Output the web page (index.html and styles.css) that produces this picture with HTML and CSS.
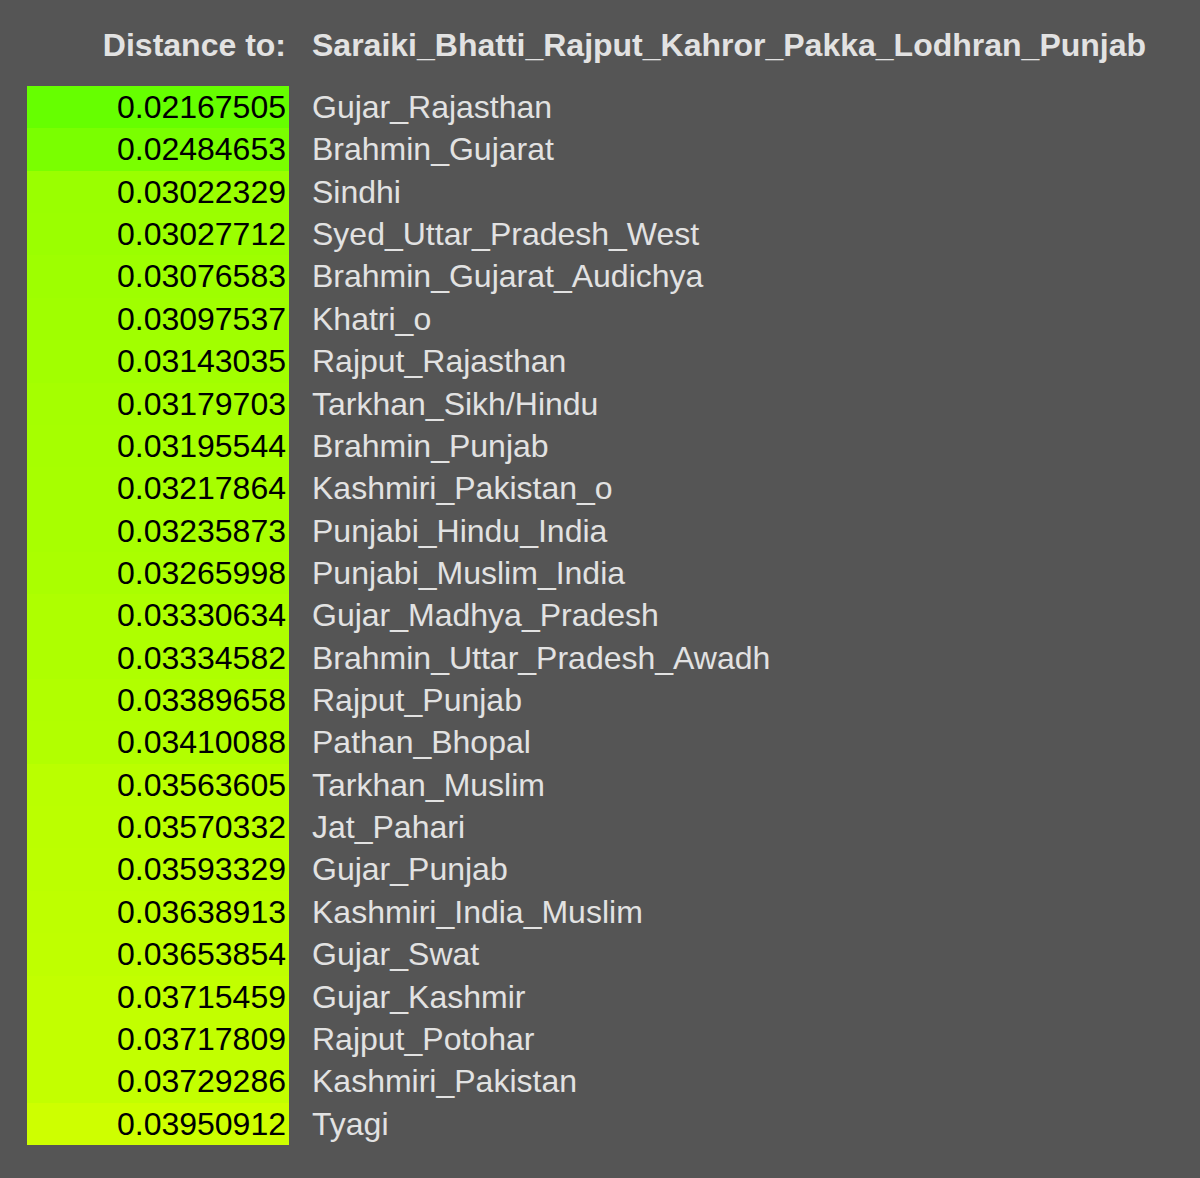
FILE: index.html
```html
<!DOCTYPE html>
<html>
<head>
<meta charset="utf-8">
<title>Distance</title>
<link rel="stylesheet" href="styles.css">
</head>
<body>
<div class="page">
  <div class="head">
    <div class="label">Distance to:</div>
    <div class="target">Saraiki_Bhatti_Rajput_Kahror_Pakka_Lodhran_Punjab</div>
  </div>
  <div class="list">
    <div class="row"><div class="val" style="background:#66ff00">0.02167505</div><div class="name">Gujar_Rajasthan</div></div>
    <div class="row"><div class="val" style="background:#7aff00">0.02484653</div><div class="name">Brahmin_Gujarat</div></div>
    <div class="row"><div class="val" style="background:#9aff00">0.03022329</div><div class="name">Sindhi</div></div>
    <div class="row"><div class="val" style="background:#9bff00">0.03027712</div><div class="name">Syed_Uttar_Pradesh_West</div></div>
    <div class="row"><div class="val" style="background:#9eff00">0.03076583</div><div class="name">Brahmin_Gujarat_Audichya</div></div>
    <div class="row"><div class="val" style="background:#a0ff00">0.03097537</div><div class="name">Khatri_o</div></div>
    <div class="row"><div class="val" style="background:#a2ff00">0.03143035</div><div class="name">Rajput_Rajasthan</div></div>
    <div class="row"><div class="val" style="background:#a5ff00">0.03179703</div><div class="name">Tarkhan_Sikh/Hindu</div></div>
    <div class="row"><div class="val" style="background:#a6ff00">0.03195544</div><div class="name">Brahmin_Punjab</div></div>
    <div class="row"><div class="val" style="background:#a7ff00">0.03217864</div><div class="name">Kashmiri_Pakistan_o</div></div>
    <div class="row"><div class="val" style="background:#a8ff00">0.03235873</div><div class="name">Punjabi_Hindu_India</div></div>
    <div class="row"><div class="val" style="background:#aaff00">0.03265998</div><div class="name">Punjabi_Muslim_India</div></div>
    <div class="row"><div class="val" style="background:#aeff00">0.03330634</div><div class="name">Gujar_Madhya_Pradesh</div></div>
    <div class="row"><div class="val" style="background:#aeff00">0.03334582</div><div class="name">Brahmin_Uttar_Pradesh_Awadh</div></div>
    <div class="row"><div class="val" style="background:#b1ff00">0.03389658</div><div class="name">Rajput_Punjab</div></div>
    <div class="row"><div class="val" style="background:#b2ff00">0.03410088</div><div class="name">Pathan_Bhopal</div></div>
    <div class="row"><div class="val" style="background:#baff00">0.03563605</div><div class="name">Tarkhan_Muslim</div></div>
    <div class="row"><div class="val" style="background:#bbff00">0.03570332</div><div class="name">Jat_Pahari</div></div>
    <div class="row"><div class="val" style="background:#bcff00">0.03593329</div><div class="name">Gujar_Punjab</div></div>
    <div class="row"><div class="val" style="background:#beff00">0.03638913</div><div class="name">Kashmiri_India_Muslim</div></div>
    <div class="row"><div class="val" style="background:#bfff00">0.03653854</div><div class="name">Gujar_Swat</div></div>
    <div class="row"><div class="val" style="background:#c2ff00">0.03715459</div><div class="name">Gujar_Kashmir</div></div>
    <div class="row"><div class="val" style="background:#c2ff00">0.03717809</div><div class="name">Rajput_Potohar</div></div>
    <div class="row"><div class="val" style="background:#c3ff00">0.03729286</div><div class="name">Kashmiri_Pakistan</div></div>
    <div class="row"><div class="val" style="background:#ceff00">0.03950912</div><div class="name">Tyagi</div></div>
  </div>
</div>
</body>
</html>
```
FILE: styles.css
```css
html, body {
  margin: 0;
  padding: 0;
  background: #555555;
}
body {
  font-family: "Liberation Sans", Arial, sans-serif;
  font-size: 32px;
  color: #e2e2e2;
  width: 1200px;
  height: 1178px;
  overflow: hidden;
}
.page {
  padding: 24px 0 0 27px;
}
.head {
  display: flex;
  height: 42px;
  line-height: 42px;
  margin-bottom: 20px;
  font-weight: bold;
  white-space: nowrap;
}
.head .label {
  width: 259px;
  padding-right: 3px;
  text-align: right;
  flex: none;
}
.head .target {
  padding-left: 23px;
}
.list {
  display: flex;
  flex-direction: column;
}
.row {
  display: flex;
  height: 42.36px;
  line-height: 42.36px;
  white-space: nowrap;
}
.val {
  width: 259px;
  padding-right: 3px;
  text-align: right;
  color: #000;
  flex: none;
}
.name {
  padding-left: 23px;
}
```
